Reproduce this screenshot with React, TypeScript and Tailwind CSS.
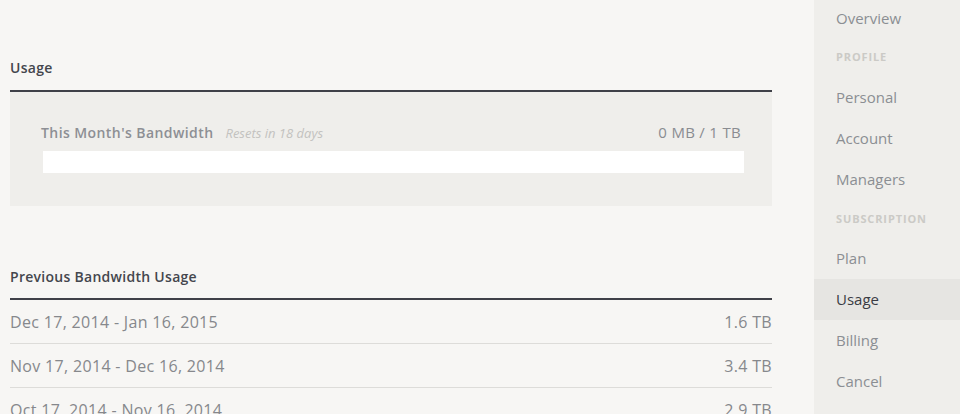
const rows = [
  { range: "Dec 17, 2014 - Jan 16, 2015", amount: "1.6 TB" },
  { range: "Nov 17, 2014 - Dec 16, 2014", amount: "3.4 TB" },
  { range: "Oct 17, 2014 - Nov 16, 2014", amount: "2.9 TB" },
  { range: "Sep 17, 2014 - Oct 16, 2014", amount: "2.2 TB" },
];

const NavItem = ({ label, active, h = "h-[41px]" }: { label: string; active?: boolean; h?: string }) => (
  <div
    className={`${h} flex items-center pl-[22px] text-[15px] ${
      active ? "bg-[#e6e5e2] text-[#3a3c44]" : "text-[#8b8e93]"
    }`}
  >
    {label}
  </div>
);

const NavLabel = ({ label, h = "h-10" }: { label: string; h?: string }) => (
  <div className={`${h} flex items-center pl-[22px] text-[11px] font-bold tracking-[0.08em] text-[#cbcac6]`}>
    {label}
  </div>
);

export default function App() {
  return (
    <div
      className="flex h-[414px] overflow-hidden bg-[#f7f6f4]"
      style={{ fontFamily: '"Open Sans", "Liberation Sans", sans-serif' }}
    >
      <main className="flex-1 pl-[10px] pr-[42px]">
        {/* current month */}
        <section className="pt-[58px]">
          <h2 className="pb-3 text-[14px] leading-5 font-semibold tracking-[0.02em] text-[#44464d] border-b-2 border-[#3f4048]">
            Usage
          </h2>
          <div className="bg-[#efeeeb] pl-[31px] pr-[31px] pt-[29px] pb-[33px]">
            <div className="flex items-baseline justify-between h-5">
              <div className="flex items-baseline gap-3">
                <span className="text-[14px] font-semibold tracking-[0.03em] text-[#8d8f94]">
                  This Month's Bandwidth
                </span>
                <span className="text-[13px] italic text-[#c3c2bf]">Resets in 18 days</span>
              </div>
              <span className="text-[15px] tracking-[0.02em] text-[#8a8c91]">0 MB / 1 TB</span>
            </div>
            <div className="mt-[10px] ml-[2px] -mr-[3px] h-[22px] bg-white"></div>
          </div>
        </section>

        {/* history */}
        <section className="mt-[61px]">
          <h2 className="pb-[11px] text-[14px] leading-5 font-semibold tracking-[0.02em] text-[#44464d] border-b-2 border-[#3f4048]">
            Previous Bandwidth Usage
          </h2>
          {rows.map((r) => (
            <div
              key={r.range}
              className="h-11 flex items-center justify-between border-b border-[#dddcd9] text-[16px] tracking-[0.02em] text-[#86888c]"
            >
              <span>{r.range}</span>
              <span>{r.amount}</span>
            </div>
          ))}
        </section>
      </main>

      <aside className="w-[146px] bg-[#efeeeb]">
        <NavItem label="Overview" h="h-[37px]" />
        <NavLabel label="PROFILE" />
        <NavItem label="Personal" />
        <NavItem label="Account" />
        <NavItem label="Managers" />
        <NavLabel label="SUBSCRIPTION" h="h-[38px]" />
        <NavItem label="Plan" />
        <NavItem label="Usage" active />
        <NavItem label="Billing" />
        <NavItem label="Cancel" />
      </aside>
    </div>
  );
}
